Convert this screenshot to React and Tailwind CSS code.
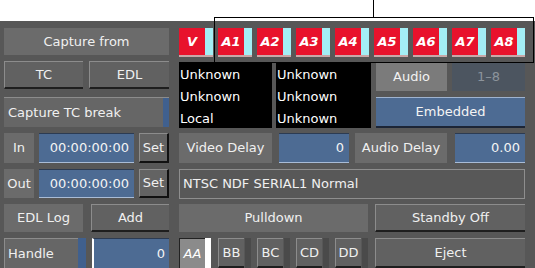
import React from 'react';

const font = { fontFamily: '"DejaVu Sans", "Liberation Sans", sans-serif' };

const flat = 'bg-[#6b6b6b] flex items-center justify-center text-[#f0f0f0]';
const raised =
  'bg-[#616161] border-t border-l border-[#8c8c8c] border-b-2 border-b-[#1e1e1e] flex items-center justify-center text-[#f0f0f0]';
const field =
  'bg-[#4d6b93] border-t border-t-[#2c3b52] border-b border-b-[#a9bcd6] flex items-center justify-end pr-[5px] text-[#f4f4f4]';

const tracks = ['V', 'A1', 'A2', 'A3', 'A4', 'A5', 'A6', 'A7', 'A8'];
const pulls = ['AA', 'BB', 'BC', 'CD', 'DD'];

function Track({ label }) {
  return (
    <div className="flex h-[29px] w-[34px] flex-col">
      <div className="flex h-[27px]">
        <div className="flex w-[26px] items-center justify-center bg-[#e8122c] text-[13px] font-semibold italic text-white">
          {label}
        </div>
        <div className="w-[8px] bg-[#a3eef5]" />
      </div>
      <div className="h-[2px] bg-[#c8a8a8]" />
    </div>
  );
}

function Pull({ label, active }) {
  return (
    <div className="flex h-full w-[33px]">
      {active ? (
        <>
          <div className="flex w-[26px] items-center justify-center border-t border-l border-[#222] bg-[#8b8b8b] italic text-white">
            {label}
          </div>
          <div className="w-[6px] bg-white" />
        </>
      ) : (
        <>
          <div className="flex w-[26px] items-center justify-center border-t border-l border-[#8c8c8c] border-b-2 border-b-[#1e1e1e] bg-[#616161] text-[#f0f0f0]">
            {label}
          </div>
          <div className="ml-[1px] w-[6px] bg-[#4a4a4a]" />
        </>
      )}
    </div>
  );
}

function TimeRow({ label }) {
  return (
    <div className="flex h-full gap-[5px]">
      <div className={`${flat} w-[30px]`}>{label}</div>
      <div className={`${field} w-[95px]`}>00:00:00:00</div>
      <div className="flex w-[30px] items-center justify-center border-t border-l border-[#8c8c8c] border-r-2 border-b-2 border-r-[#111] border-b-[#111] bg-[#636363] text-[#f0f0f0]">
        Set
      </div>
    </div>
  );
}

export default function App() {
  return (
    <div className="relative h-[268px] w-[535px] overflow-hidden bg-white text-[13px]" style={font}>
      <div className="mt-[21px] h-[247px] bg-[#575757] pl-[4px] pt-[7px]">
        <div className="grid grid-cols-[165px_346px] grid-rows-[27px_30px_30px_30px_29px_28px_30px] gap-x-[10px] gap-y-[6px]">
          {/* row 1 */}
          <div className={flat}>Capture from</div>
          <div className="flex gap-[5px]">
            {tracks.map((t) => (
              <Track key={t} label={t} />
            ))}
          </div>

          {/* row 2 left */}
          <div className="flex h-[28px] gap-[6px]">
            <div className={`${raised} w-[79px]`}>TC</div>
            <div className={`${raised} w-[80px]`}>EDL</div>
          </div>

          {/* rows 2-3 right */}
          <div className="row-span-2 grid grid-cols-[192px_71px_73px] grid-rows-[29px_31px] gap-x-[5px] gap-y-[6px] pt-[1px]">
            <div className="row-span-2 flex gap-[4px]">
              <div className="w-[93px] bg-black pl-[1px] pt-[2px] leading-[22px] text-white">
                <div>Unknown</div>
                <div>Unknown</div>
                <div>Local</div>
              </div>
              <div className="w-[95px] bg-black pl-[1px] pt-[2px] leading-[22px] text-white">
                <div>Unknown</div>
                <div>Unknown</div>
                <div>Unknown</div>
              </div>
            </div>
            <div className="flex items-center justify-center bg-[#7b7b7b] text-[#f2f2f2]">Audio</div>
            <div className="flex items-center justify-center bg-[#4c5560] text-[#8d949c]">1–8</div>
            <div className="col-span-2 flex items-center justify-center border-t border-t-[#9fb3cf] border-b-2 border-b-[#1c2536] bg-[#4d6b93] text-[#f4f4f4]">
              Embedded
            </div>
          </div>

          {/* row 3 left */}
          <div className="flex border-t border-[#8c8c8c] bg-[#666]">
            <div className="flex flex-1 items-center pl-[4px] text-[#f0f0f0]">Capture TC break</div>
            <div className="w-[6px] bg-[#40608e]" />
          </div>

          {/* row 4 */}
          <TimeRow label="In" />
          <div className="flex h-full">
            <div className={`${flat} w-[93px]`}>Video Delay</div>
            <div className={`${field} ml-[7px] w-[70px]`}>0</div>
            <div className={`${flat} ml-[6px] w-[92px]`}>Audio Delay</div>
            <div className={`${field} ml-[8px] w-[70px]`}>0.00</div>
          </div>

          {/* row 5 */}
          <TimeRow label="Out" />
          <div className="flex h-[30px] items-center border border-[#8e8e8e] bg-[#585858] pl-[3px] text-[#f0f0f0]">
            NTSC NDF SERIAL1 Normal
          </div>

          {/* row 6 */}
          <div className="flex h-full gap-[8px]">
            <div className={`${flat} w-[79px]`}>EDL Log</div>
            <div className={`${raised} w-[78px]`}>Add</div>
          </div>
          <div className="flex h-full gap-[7px]">
            <div className={`${flat} w-[189px]`}>Pulldown</div>
            <div className={`${raised} w-[150px]`}>Standby Off</div>
          </div>

          {/* row 7 */}
          <div className="flex h-full">
            <div className="flex w-[74px] items-center border-t border-l border-[#8c8c8c] bg-[#666] pl-[3px] text-[#f0f0f0]">
              Handle
            </div>
            <div className="w-[8px] bg-[#40608e]" />
            <div className="ml-[6px] flex w-[77px] items-center justify-end border-t border-t-[#2c3b52] border-l-2 border-l-white bg-[#4d6b93] pr-[4px] text-[#f4f4f4]">
              0
            </div>
          </div>
          <div className="flex h-full">
            <div className="flex gap-[6px]">
              {pulls.map((p, i) => (
                <Pull key={p} label={p} active={i === 0} />
              ))}
            </div>
            <div className={`${raised} ml-[7px] w-[150px]`}>Eject</div>
          </div>
        </div>
      </div>

      {/* callout */}
      <div className="absolute left-[373px] top-0 h-[17px] w-px bg-black" />
      <div className="absolute left-[214px] top-[17px] h-[46px] w-[320px] border border-black" />
    </div>
  );
}
